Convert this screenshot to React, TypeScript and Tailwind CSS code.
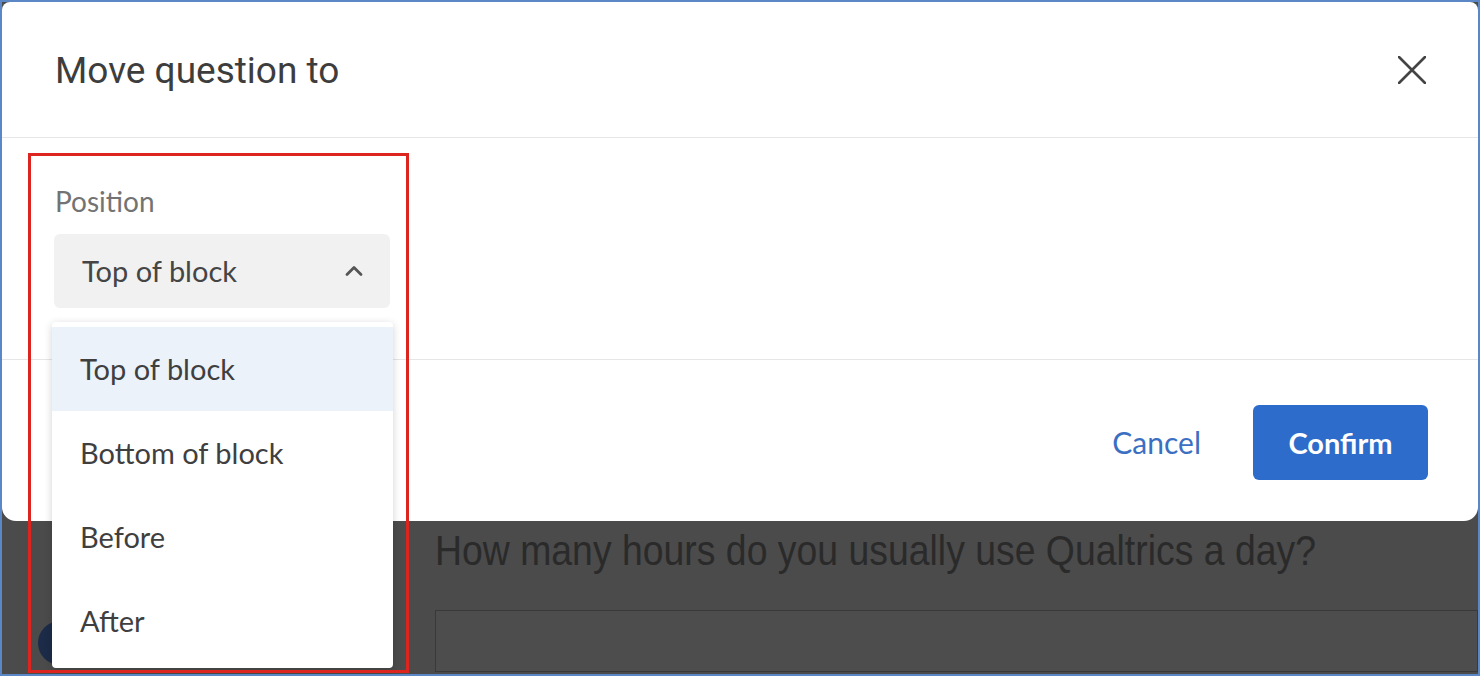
import { ChevronUp } from 'lucide-react';

const options = ['Top of block', 'Bottom of block', 'Before', 'After'];

const CloseIcon = () => (
  <svg width="28" height="28" viewBox="0 0 28 28" fill="none">
    <path d="M1 1L27 27M27 1L1 27" stroke="#444" strokeWidth="2.6" strokeLinecap="round" />
  </svg>
);

export default function App() {
  return (
    <div className="w-[1484px] h-[680px] bg-white">
      <div className="relative w-[1480px] h-[676px] border-2 border-[#5b87c7] bg-[#4b4b4b] overflow-hidden font-['Lato','Open_Sans',sans-serif]">
        {/* modal */}
        <div className="bg-white rounded-t-[8px] rounded-b-[14px] h-[519px] flex flex-col">
          <div className="h-[136px] flex items-center justify-between pl-[53px] pr-[52px] border-b border-[#e6e6e6]">
            <h1 className="text-[37px] text-[#3d3d3d] font-['Roboto',sans-serif] font-normal pt-[2px]">
              Move question to
            </h1>
            <CloseIcon />
          </div>

          <div className="h-[222px] border-b border-[#e6e6e6] pl-[52px] pt-[49px]">
            <div className="text-[28px] text-[#737373] leading-none mb-[19px] pl-[1px]">Position</div>
            <div className="relative w-[336px]">
              <div className="h-[74px] bg-[#f1f1f1] rounded-[6px] flex items-center justify-between pl-[28px] pr-[22px]">
                <span className="text-[29px] text-[#454545]">Top of block</span>
                <ChevronUp size={28} strokeWidth={2.4} color="#555" />
              </div>
              <div className="absolute left-[-2px] top-[88px] w-[341px] bg-white shadow-[0_2px_8px_rgba(0,0,0,0.18)] rounded-[4px] py-[5px] z-20">
                {options.map((o, i) => (
                  <div
                    key={o}
                    className={`h-[84px] flex items-center pl-[28px] text-[29px] text-[#3f3f3f] ${i === 0 ? 'bg-[#ebf2fa]' : ''}`}
                  >
                    {o}
                  </div>
                ))}
              </div>
            </div>
          </div>

          <div className="flex-1 flex items-center justify-end gap-[52px] pr-[50px] pt-[4px]">
            <button className="text-[30px] text-[#3b6fc2]">Cancel</button>
            <button className="w-[175px] h-[75px] rounded-[6px] bg-[#2d6cca] text-white text-[29px] font-bold">
              Confirm
            </button>
          </div>
        </div>

        {/* page behind */}
        <div className="flex pl-[36px] pt-[2px]">
          <div className="w-[44px] h-[44px] rounded-full bg-[#1c2b48] mt-[98px] shrink-0" />
          <div className="flex-1 ml-[353px]">
            <div className="text-[42px] text-[#2a2a2a] font-['Liberation_Sans',sans-serif] whitespace-nowrap origin-left scale-x-[0.89] leading-[56px]">
              How many hours do you usually use Qualtrics a day?
            </div>
            <div className="mt-[31px] h-[62px] border border-[#393939] bg-[#4d4d4d]" />
          </div>
        </div>

        {/* highlight */}
        <div className="absolute left-[26px] top-[151px] w-[381px] h-[520px] border-[3px] border-[#dd2520] z-30 pointer-events-none" />
      </div>
    </div>
  );
}
